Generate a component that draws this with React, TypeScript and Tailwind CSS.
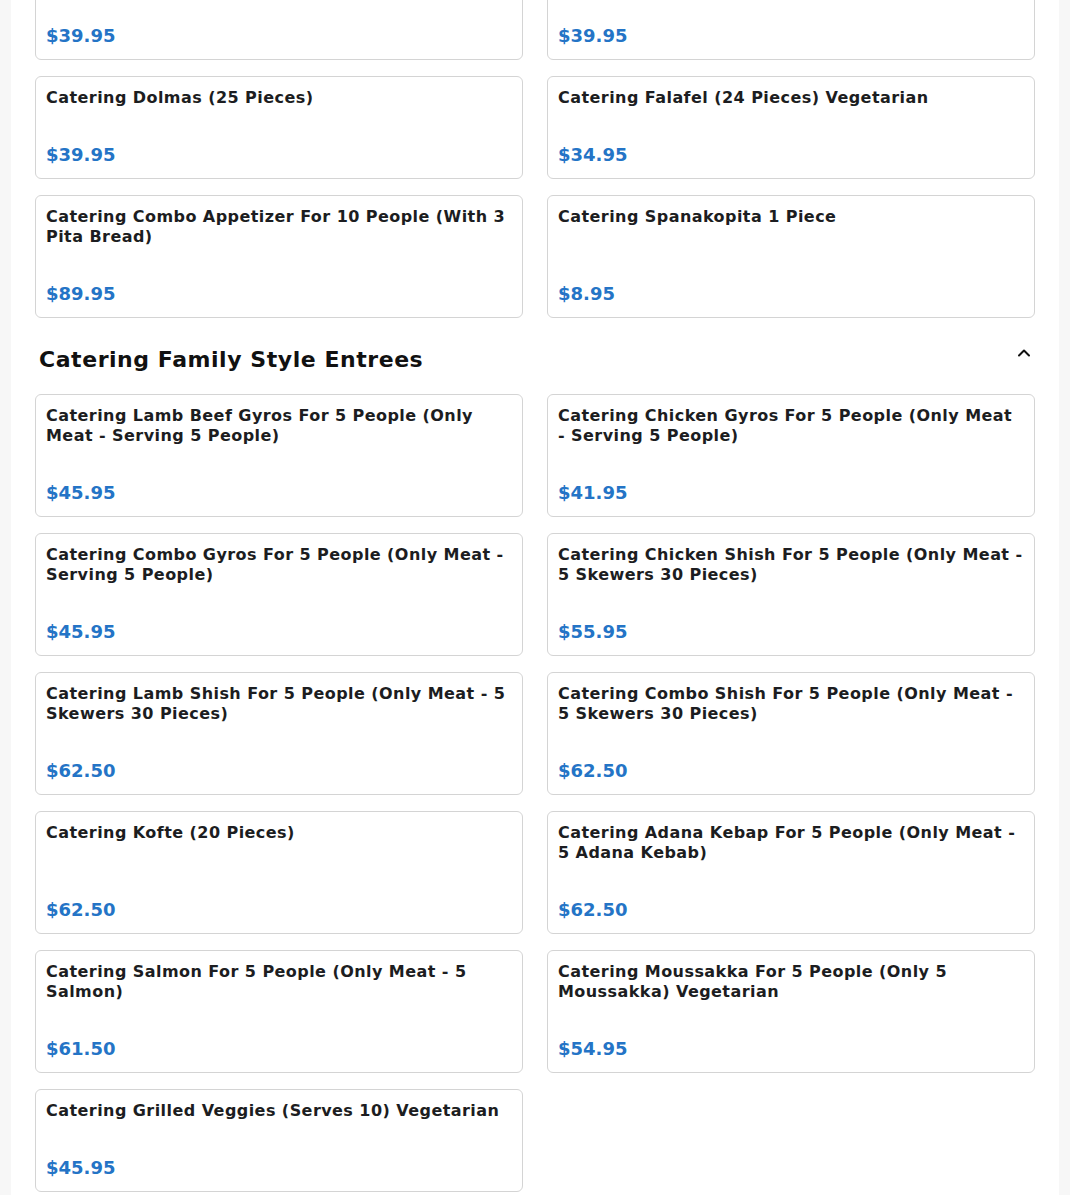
interface MenuItem {
  name: string;
  price: string;
}

const topItems: MenuItem[] = [
  { name: "Catering Hummus (32 Oz)", price: "$39.95" },
  { name: "Catering Baba Ghanoush (32 Oz)", price: "$39.95" },
  { name: "Catering Dolmas (25 Pieces)", price: "$39.95" },
  { name: "Catering Falafel (24 Pieces) Vegetarian", price: "$34.95" },
  { name: "Catering Combo Appetizer For 10 People (With 3 Pita Bread)", price: "$89.95" },
  { name: "Catering Spanakopita 1 Piece", price: "$8.95" },
];

const entrees: MenuItem[] = [
  { name: "Catering Lamb Beef Gyros For 5 People (Only Meat - Serving 5 People)", price: "$45.95" },
  { name: "Catering Chicken Gyros For 5 People (Only Meat - Serving 5 People)", price: "$41.95" },
  { name: "Catering Combo Gyros For 5 People (Only Meat - Serving 5 People)", price: "$45.95" },
  { name: "Catering Chicken Shish For 5 People (Only Meat - 5 Skewers 30 Pieces)", price: "$55.95" },
  { name: "Catering Lamb Shish For 5 People (Only Meat - 5 Skewers 30 Pieces)", price: "$62.50" },
  { name: "Catering Combo Shish For 5 People (Only Meat - 5 Skewers 30 Pieces)", price: "$62.50" },
  { name: "Catering Kofte (20 Pieces)", price: "$62.50" },
  { name: "Catering Adana Kebap For 5 People (Only Meat - 5 Adana Kebab)", price: "$62.50" },
  { name: "Catering Salmon For 5 People (Only Meat - 5 Salmon)", price: "$61.50" },
  { name: "Catering Moussakka For 5 People (Only 5 Moussakka) Vegetarian", price: "$54.95" },
  { name: "Catering Grilled Veggies (Serves 10) Vegetarian", price: "$45.95" },
];

function ItemCard({ item }: { item: MenuItem }) {
  return (
    <button
      type="button"
      className="flex flex-col items-start rounded-md border border-[#d4d4d4] bg-white px-[10px] pt-[11px] pb-[9px] text-left"
    >
      <p className="mb-[33px] text-base leading-5 font-bold tracking-[0.0275em] text-[#1c1d21]">{item.name}</p>
      <p className="mt-auto text-lg leading-7 font-bold text-[#2474c6]">{item.price}</p>
    </button>
  );
}

function ItemGrid({ items }: { items: MenuItem[] }) {
  return (
    <div className="grid grid-cols-2 gap-x-6 gap-y-4">
      {items.map((item) => (
        <ItemCard key={item.name} item={item} />
      ))}
    </div>
  );
}

export default function App() {
  return (
    <div className="min-h-screen bg-[#f7f7f7] font-['DejaVu_Sans',sans-serif]">
      <div className="mx-auto min-h-screen w-[1048px] overflow-hidden bg-white px-6">
        <div className="-mt-[43px]">
          <ItemGrid items={topItems} />
        </div>

        <section>
          <div className="mt-[28px] mb-[20px] flex items-start justify-between pl-1 pr-[3px]">
            <h2 className="text-[22px] leading-7 font-bold tracking-[0.025em] text-[#111]">
              Catering Family Style Entrees
            </h2>
            <svg width="16" height="16" viewBox="0 0 16 16" fill="none" className="mt-[-1px]">
              <polyline
                points="3,10.5 8,5.5 13,10.5"
                stroke="#111"
                strokeWidth="2"
                strokeLinecap="round"
                strokeLinejoin="round"
              />
            </svg>
          </div>
          <ItemGrid items={entrees} />
        </section>
      </div>
    </div>
  );
}
